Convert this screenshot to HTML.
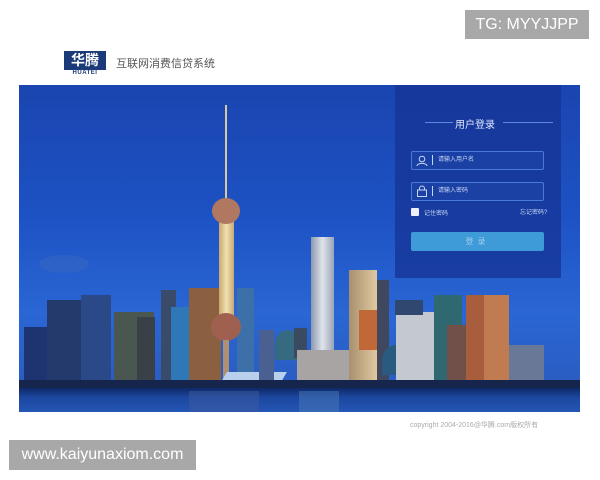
<!DOCTYPE html>
<html><head><meta charset="utf-8"><style>
*{margin:0;padding:0;box-sizing:border-box}
body{width:600px;height:480px;background:#fff;position:relative;overflow:hidden;font-family:"Liberation Sans","Noto Sans CJK SC",sans-serif}
.a{position:absolute}
.tg{left:465px;top:10px;width:124px;height:29px;background:#a8a8a8;color:#fff;font-size:16px;line-height:29px;text-align:center}
.www{left:9px;top:440px;width:187px;height:30px;background:#a8a8a8;color:#fff;font-size:16px;line-height:30px;text-align:center}
.logo{left:64px;top:51px;width:42px;height:19px;background:#1b3a7a;color:#fff;font-size:14px;font-weight:bold;line-height:19px;text-align:center}
.logosub{left:64px;top:70px;width:42px;font-size:6px;font-weight:bold;color:#1b3a7a;text-align:center;letter-spacing:.5px}
.title{left:116px;top:55px;font-size:11px;color:#555}
.scene{left:19px;top:85px;width:561px;height:327px;overflow:hidden;background:linear-gradient(180deg,#1a45b0 0%,#1d52c4 40%,#2a66d4 70%,#2a5ec4 88%)}
.s{position:absolute}
.water{left:0;top:303px;width:561px;height:24px;background:linear-gradient(180deg,#0e2a66 0%,#1c47a0 40%,#2456b4 100%)}
.panel{left:395px;top:85px;width:166px;height:193px;background:rgba(22,52,150,.78)}
.inp{position:absolute;left:16px;width:133px;height:19px;border:1px solid #4a7ad8;border-radius:2px;background:rgba(30,70,170,.6);color:#c8d6f5;font-size:6px;line-height:17px;padding-left:26px}
.btn{position:absolute;left:16px;top:147px;width:133px;height:19px;background:#3f9ad8;border-radius:2px;color:#9fcdee;font-size:8px;line-height:19px;text-align:center;letter-spacing:4px}
.copy{left:410px;top:420px;font-size:7px;color:#aaa}
</style></head><body>
<div class="a tg">TG: MYYJJPP</div>
<div class="a logo">华腾</div>
<div class="a logosub">HUATEI</div>
<div class="a title">互联网消费信贷系统</div>
<div class="a scene">
 <div class="s" style="left:20px;top:170px;width:50px;height:18px;border-radius:50%;background:#3566c0;opacity:.6"></div>
 <div class="s" style="left:5px;top:242px;width:30px;height:60px;background:#1e3470"></div>
 <div class="s" style="left:28px;top:215px;width:40px;height:85px;background:#243a6c"></div>
 <div class="s" style="left:62px;top:210px;width:30px;height:90px;background:#2b4888"></div>
 <div class="s" style="left:95px;top:227px;width:40px;height:75px;background:#4a5650"></div>
 <div class="s" style="left:118px;top:232px;width:18px;height:70px;background:#3a4048"></div>
 <div class="s" style="left:142px;top:205px;width:15px;height:97px;background:#3a4a6a"></div>
 <div class="s" style="left:152px;top:222px;width:25px;height:80px;background:#2f78b8"></div>
 <div class="s" style="left:170px;top:203px;width:32px;height:99px;background:#8a6040"></div>
 <div class="s" style="left:218px;top:203px;width:17px;height:99px;background:#3d6fa8"></div>
 <div class="s" style="left:206px;top:20px;width:2px;height:100px;background:#d8c8a0"></div>
 <div class="s" style="left:200px;top:135px;width:15px;height:100px;background:linear-gradient(90deg,#c8a870,#f0e0b0,#c8a870)"></div>
 <div class="s" style="left:193px;top:113px;width:28px;height:26px;border-radius:50%;background:#b07860"></div>
 <div class="s" style="left:192px;top:228px;width:30px;height:28px;border-radius:50%;background:#a06050"></div>
 <div class="s" style="left:204px;top:255px;width:6px;height:45px;background:#b09070"></div>
 <div class="s" style="left:205px;top:287px;width:60px;height:10px;background:#b8d0ec;transform:skewX(-30deg)"></div>
 <div class="s" style="left:240px;top:245px;width:15px;height:57px;background:#4a6090"></div>
 <div class="s" style="left:256px;top:245px;width:25px;height:30px;border-radius:50% 50% 0 0;background:#356a80"></div>
 <div class="s" style="left:275px;top:243px;width:13px;height:30px;background:#3a4a60"></div>
 <div class="s" style="left:292px;top:152px;width:23px;height:150px;background:linear-gradient(90deg,#8c98b0,#dfe4ea,#9aa4b8)"></div>
 <div class="s" style="left:278px;top:265px;width:85px;height:37px;background:#a8a4a4"></div>
 <div class="s" style="left:330px;top:185px;width:28px;height:117px;background:linear-gradient(90deg,#a89070,#e0c8a0)"></div>
 <div class="s" style="left:340px;top:225px;width:25px;height:40px;background:#c06838"></div>
 <div class="s" style="left:358px;top:195px;width:12px;height:100px;background:#404860"></div>
 <div class="s" style="left:363px;top:260px;width:28px;height:30px;border-radius:50% 50% 0 0;background:#2a5a80"></div>
 <div class="s" style="left:377px;top:227px;width:40px;height:75px;background:#c4c8d0"></div>
 <div class="s" style="left:376px;top:215px;width:28px;height:15px;background:#304870"></div>
 <div class="s" style="left:415px;top:210px;width:28px;height:92px;background:#2f6870"></div>
 <div class="s" style="left:428px;top:240px;width:40px;height:60px;background:#705048"></div>
 <div class="s" style="left:447px;top:210px;width:20px;height:90px;background:#a85e3c"></div>
 <div class="s" style="left:465px;top:210px;width:25px;height:92px;background:#c07c50"></div>
 <div class="s" style="left:490px;top:260px;width:35px;height:42px;background:#6a7898"></div>
 <div class="s" style="left:0;top:295px;width:561px;height:8px;background:#15254c"></div>
 <div class="s water"></div>
 <div class="s" style="left:170px;top:306px;width:70px;height:21px;background:#3e5aa0;opacity:.5"></div>
 <div class="s" style="left:280px;top:306px;width:40px;height:21px;background:#4a7ab8;opacity:.5"></div>
</div>
<div class="a panel">
 <div class="a" style="left:30px;top:37px;width:28px;height:1px;background:#5d8ae0"></div>
 <div class="a" style="left:108px;top:37px;width:50px;height:1px;background:#5d8ae0"></div>
 <div class="a" style="left:60px;top:31px;font-size:10px;color:#dfe8ff">用户登录</div>
 <div class="inp" style="top:66px">请输入用户名</div>
 <div class="inp" style="top:97px">请输入密码</div>
 <svg class="a" style="left:21px;top:70px" width="12" height="11" viewBox="0 0 12 11"><circle cx="6" cy="4" r="2.8" fill="none" stroke="#c8d6f5"/><path d="M1 11C1 7.5 11 7.5 11 11" fill="none" stroke="#c8d6f5"/></svg>
 <svg class="a" style="left:21px;top:100px" width="12" height="12" viewBox="0 0 12 12"><path d="M3.5 5V3.5a2.5 2.5 0 0 1 5 0V5" fill="none" stroke="#c8d6f5"/><rect x="1.5" y="5" width="9" height="6.5" fill="none" stroke="#c8d6f5"/></svg>
 <div class="a" style="left:37px;top:70px;width:1px;height:10px;background:#c8d6f5"></div>
 <div class="a" style="left:37px;top:101px;width:1px;height:10px;background:#c8d6f5"></div>
 <div class="a" style="left:16px;top:123px;width:8px;height:8px;background:#eef;border-radius:1px"></div>
 <div class="a" style="left:29px;top:123px;font-size:6px;color:#c8d6f5">记住密码</div>
 <div class="a" style="left:125px;top:122px;font-size:6px;color:#c8d6f5">忘记密码?</div>
 <div class="btn">登录</div>
</div>
<div class="a copy">copyright 2004-2016@华腾.com版权所有</div>
<div class="a www">www.kaiyunaxiom.com</div>
</body></html>
